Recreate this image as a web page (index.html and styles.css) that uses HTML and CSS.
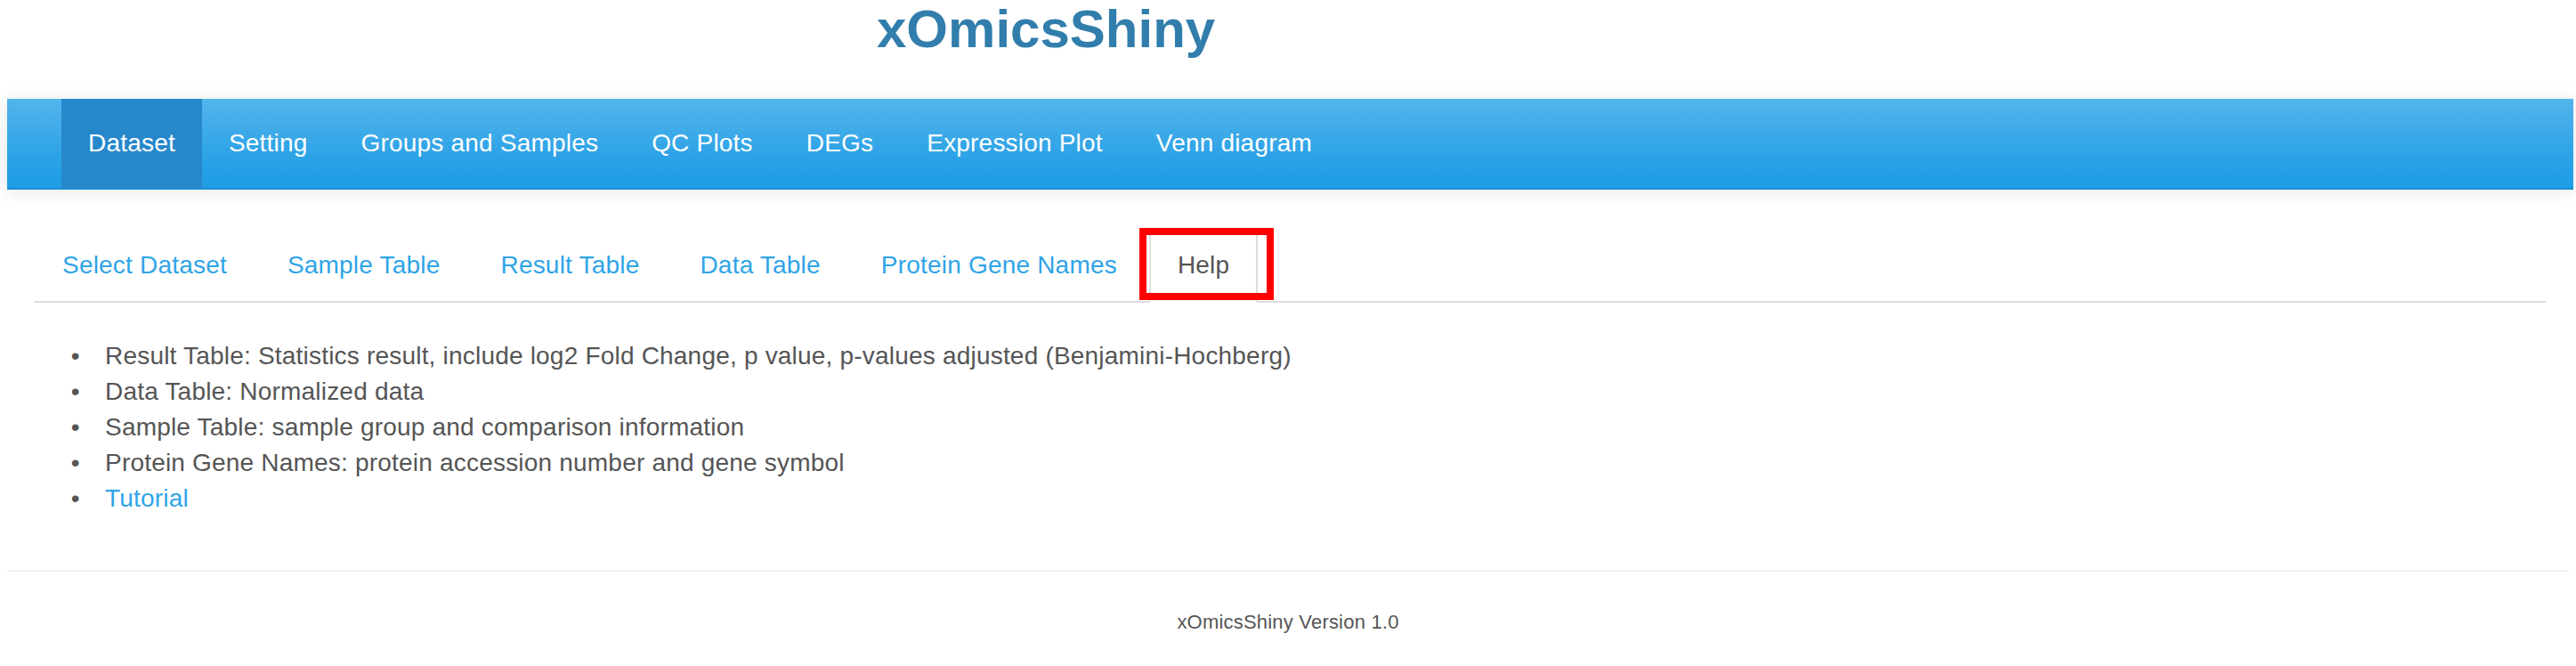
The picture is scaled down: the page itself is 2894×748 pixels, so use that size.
FILE: index.html
```html
<!DOCTYPE html>
<html lang="en">
<head>
<meta charset="utf-8">
<title>xOmicsShiny</title>
<link rel="stylesheet" href="styles.css">
</head>
<body>
<h2 class="app-title">xOmicsShiny</h2>
<nav class="navbar">
  <ul class="navbar-nav">
    <li class="nav-item active"><a>Dataset</a></li>
    <li class="nav-item"><a>Setting</a></li>
    <li class="nav-item"><a>Groups and Samples</a></li>
    <li class="nav-item"><a>QC Plots</a></li>
    <li class="nav-item"><a>DEGs</a></li>
    <li class="nav-item"><a>Expression Plot</a></li>
    <li class="nav-item"><a>Venn diagram</a></li>
  </ul>
</nav>
<main class="content">
  <ul class="nav-tabs">
    <li class="tab"><a>Select Dataset</a></li>
    <li class="tab"><a>Sample Table</a></li>
    <li class="tab"><a>Result Table</a></li>
    <li class="tab"><a>Data Table</a></li>
    <li class="tab"><a>Protein Gene Names</a></li>
    <li class="tab active"><a>Help</a><span class="highlight"></span></li>
  </ul>
  <ul class="help-list">
    <li>Result Table: Statistics result, include log2 Fold Change, p value, p-values adjusted (Benjamini-Hochberg)</li>
    <li>Data Table: Normalized data</li>
    <li>Sample Table: sample group and comparison information</li>
    <li>Protein Gene Names: protein accession number and gene symbol</li>
    <li><a class="link">Tutorial</a></li>
  </ul>
</main>
<hr class="footer-rule">
<footer class="footer">xOmicsShiny Version 1.0</footer>
</body>
</html>
```
FILE: styles.css
```css
* {
  box-sizing: border-box;
}

body {
  margin: 0;
  font-family: "Liberation Sans", Arial, sans-serif;
  font-size: 28px;
  line-height: 40px;
  letter-spacing: 0.2px;
  color: #555555;
  background: #ffffff;
}

.app-title {
  margin: 0 0 45px 985px;
  font-size: 60px;
  line-height: 66px;
  font-weight: 700;
  letter-spacing: 0;
  color: #317eac;
}

.navbar {
  margin: 0 3px 43px 8px;
  height: 102px;
  padding-left: 61px;
  background: linear-gradient(#54b4eb, #2fa4e7 60%, #1d9ce5);
  border-bottom: 2px solid #1a8fd4;
  box-shadow: 0 2px 20px rgba(0, 0, 0, 0.1);
}

.navbar-nav {
  display: flex;
  list-style: none;
  margin: 0;
  padding: 0;
  height: 100px;
}

.nav-item a {
  display: block;
  padding: 30px;
  line-height: 40px;
  color: #ffffff;
}

.nav-item.active a {
  background: #2688cb;
}

.content {
  padding: 0 34px 0 38px;
}

.nav-tabs {
  display: flex;
  list-style: none;
  margin: 0;
  padding: 0;
  border-bottom: 2px solid #dddddd;
}

.tab {
  position: relative;
  margin-bottom: -2px;
}

.tab a {
  display: block;
  margin-right: 4px;
  padding: 20px 30px;
  line-height: 40px;
  border: 2px solid transparent;
  border-radius: 8px 8px 0 0;
  color: #2fa4e7;
}

.tab.active a {
  color: #555555;
  background: #ffffff;
  border-color: #dddddd #dddddd transparent;
}

.highlight {
  position: absolute;
  left: -11px;
  top: 0;
  width: 151px;
  height: 81px;
  border: 8px solid #ff0000;
}

.help-list {
  margin: 40px 0 0;
  padding-left: 80px;
}

.help-list li::marker {
  content: "\2022\2003";
  color: #555555;
}

.link {
  color: #2fa4e7;
}

.footer-rule {
  margin: 60px 8px 0;
  height: 0;
  border: 0;
  border-top: 2px solid #eeeeee;
}

.footer {
  padding-top: 41px;
  font-size: 22px;
  line-height: 32px;
  text-align: center;
  color: #555555;
}
```
